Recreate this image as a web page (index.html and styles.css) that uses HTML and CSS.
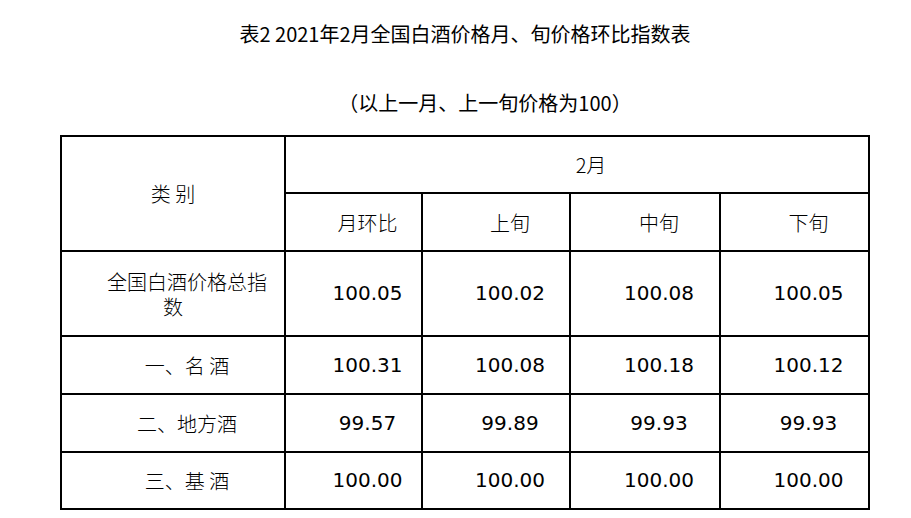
FILE: index.html
```html
<!DOCTYPE html>
<html lang="zh-CN">
<head>
<meta charset="utf-8">
<title>表2 2021年2月全国白酒价格月、旬价格环比指数表</title>
<link rel="stylesheet" href="styles.css">
</head>
<body>
<div class="page">
  <h1 class="title">表2 2021年2月全国白酒价格月、旬价格环比指数表</h1>
  <p class="subtitle">（以上一月、上一旬价格为100）</p>
  <div class="grid">
    <div class="cell head-cat"><div class="t plain">类 别</div></div>
    <div class="cell head-month"><div class="t">2月</div></div>
    <div class="cell"><div class="t">月环比</div></div>
    <div class="cell"><div class="t">上旬</div></div>
    <div class="cell"><div class="t">中旬</div></div>
    <div class="cell"><div class="t">下旬</div></div>

    <div class="cell"><div class="t">全国白酒价格总指数</div></div>
    <div class="cell num"><div class="t">100.05</div></div>
    <div class="cell num"><div class="t">100.02</div></div>
    <div class="cell num"><div class="t">100.08</div></div>
    <div class="cell num"><div class="t">100.05</div></div>

    <div class="cell"><div class="t">一、名 酒</div></div>
    <div class="cell num"><div class="t">100.31</div></div>
    <div class="cell num"><div class="t">100.08</div></div>
    <div class="cell num"><div class="t">100.18</div></div>
    <div class="cell num"><div class="t">100.12</div></div>

    <div class="cell"><div class="t">二、地方酒</div></div>
    <div class="cell num"><div class="t">99.57</div></div>
    <div class="cell num"><div class="t">99.89</div></div>
    <div class="cell num"><div class="t">99.93</div></div>
    <div class="cell num"><div class="t">99.93</div></div>

    <div class="cell"><div class="t">三、基 酒</div></div>
    <div class="cell num"><div class="t">100.00</div></div>
    <div class="cell num"><div class="t">100.00</div></div>
    <div class="cell num"><div class="t">100.00</div></div>
    <div class="cell num"><div class="t">100.00</div></div>
  </div>
</div>
</body>
</html>
```
FILE: styles.css
```css
html, body {
  margin: 0;
  padding: 0;
  background: #fff;
}
body {
  font-family: "Noto Sans CJK SC", "Noto Sans", sans-serif;
  color: #000;
}
.page {
  width: 810px;
  margin-left: 60px;
  padding-top: 20px;
}
.title {
  margin: 0;
  font-size: 20px;
  font-weight: 400;
  line-height: 28px;
  text-align: center;
}
.subtitle {
  margin: 41px 0 0;
  font-size: 20px;
  line-height: 28px;
  text-align: center;
  text-indent: 40px;
}
.grid {
  margin-top: 18px;
  display: grid;
  grid-template-columns: 222px 135px 146px 148px 147px;
  grid-template-rows: 55px 56px 83px 56px 56px 55px;
  gap: 2px;
  padding: 2px;
  background: #000;
  width: max-content;
}
.cell {
  background: #fff;
  display: flex;
  align-items: center;
  padding: 0 8px;
  font-size: 20px;
  line-height: 25px;
  font-weight: 300;
}
.head-cat {
  grid-row: span 2;
}
.head-month {
  grid-column: span 4;
}
.t {
  width: 100%;
  text-align: center;
  text-indent: 28px;
}
.t.plain {
  text-indent: 0;
}
.num {
  font-family: "DejaVu Sans", "Noto Sans", sans-serif;
  font-weight: 400;
}
```
